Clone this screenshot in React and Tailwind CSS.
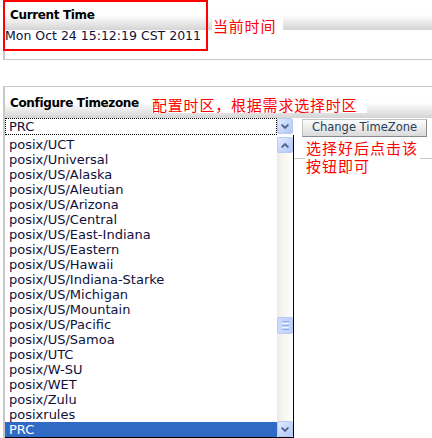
import React from "react";

const zones = [
  "posix/UCT",
  "posix/Universal",
  "posix/US/Alaska",
  "posix/US/Aleutian",
  "posix/US/Arizona",
  "posix/US/Central",
  "posix/US/East-Indiana",
  "posix/US/Eastern",
  "posix/US/Hawaii",
  "posix/US/Indiana-Starke",
  "posix/US/Michigan",
  "posix/US/Mountain",
  "posix/US/Pacific",
  "posix/US/Samoa",
  "posix/UTC",
  "posix/W-SU",
  "posix/WET",
  "posix/Zulu",
  "posixrules",
  "PRC",
];

function ArrowButton({ dir }) {
  return (
    <div className="w-[16px] h-[16px] shrink-0 rounded-[2px] border border-[#b7caf5] bg-[linear-gradient(135deg,#e3ebfd,#c3d4fa_60%,#b4c9f7)] flex items-center justify-center">
      <svg width="8" height="5" viewBox="0 0 8 5">
        <path
          d={dir === "up" ? "M0.6 4.4 L4 1.1 L7.4 4.4" : "M0.6 0.6 L4 3.9 L7.4 0.6"}
          stroke="#4d6185"
          strokeWidth="1.8"
          fill="none"
        />
      </svg>
    </div>
  );
}

function Thumb() {
  return (
    <div className="w-[16px] h-[17px] rounded-[2px] border border-[#b7caf5] bg-[linear-gradient(to_right,#cddbfc,#bfd1fa)] flex flex-col items-center justify-center gap-[1px]">
      <div className="w-[7px] h-[1px] bg-[#8eaaf0]" />
      <div className="w-[7px] h-[1px] bg-[#eef3fe]" />
      <div className="w-[7px] h-[1px] bg-[#8eaaf0]" />
      <div className="w-[7px] h-[1px] bg-[#eef3fe]" />
      <div className="w-[7px] h-[1px] bg-[#8eaaf0]" />
    </div>
  );
}

export default function App() {
  return (
    <div className="relative w-[432px] h-[438px] overflow-hidden bg-white text-[#10103a] font-['DejaVu_Sans',sans-serif]">
      {/* Current time panel */}
      <section className="ml-[3px] h-[60px] border-l-2 border-b border-[#c8c8c8]">
        <h2 className="h-[30px] flex items-center pl-[5px] text-[12px] font-bold tracking-[-0.35px] text-black bg-[linear-gradient(#fff_50%,#d4d4d4)]">
          Current Time
        </h2>
        <p className="-mt-[2px] text-[12.5px] leading-[15px]">Mon Oct 24 15:12:19 CST 2011</p>
      </section>

      {/* Timezone panel */}
      <section className="mt-[26px] ml-[3px] h-[352px] border-l-2 border-t border-[#c8c8c8]">
        <h2 className="h-[31px] flex items-center pl-[5px] text-[12px] font-bold tracking-[-0.35px] text-black bg-[linear-gradient(#fff_50%,#d4d4d4)]">
          Configure Timezone
        </h2>
        <div className="flex h-[41px] border-b border-[#c8c8c8]">
          <div className="relative w-[288px] h-[17px]">
            <div className="flex h-[17px]">
              <div className="flex-1 flex items-center pl-[3px] border border-dotted border-black text-[13px] leading-[15px]">
                PRC
              </div>
              <ArrowButton dir="down" />
            </div>
            {/* open option list */}
            <div className="absolute left-0 top-full z-10 w-[289px] h-[303px] pt-[2px] flex bg-white border-r border-b border-black">
              <ul className="flex-1 text-[13px] leading-[15px]">
                {zones.map((z) => (
                  <li
                    key={z}
                    className={
                      z === "PRC"
                        ? "h-[15px] pl-[4px] bg-[#316ac5] text-white"
                        : "h-[15px] pl-[4px]"
                    }
                  >
                    {z}
                  </li>
                ))}
              </ul>
              <div className="w-[16px] flex flex-col bg-[linear-gradient(to_right,#ecebe4,#f7f6f2_40%,#fdfdfb)]">
                <ArrowButton dir="up" />
                <div className="flex-1 pt-[164px]">
                  <Thumb />
                </div>
                <ArrowButton dir="down" />
              </div>
            </div>
          </div>
          <button className="ml-[9px] mt-[1px] w-[125px] h-[18px] flex items-center justify-center border border-[#c4c4c4] border-r-[#8a8a8a] border-b-[#8a8a8a] bg-[linear-gradient(#fdfdfd,#dadada)] text-[11.5px] text-[#24415f]">
            Change TimeZone
          </button>
        </div>
      </section>

      {/* Red notes */}
      <div className="absolute left-[3px] top-0 w-[205px] h-[51px] border-2 border-[#ff0000]" />
      <div className="absolute left-[212px] top-[17px] w-[71px] h-[17px] bg-white pl-[1px] text-[15px] leading-[17px] tracking-[0.8px] text-[#ff0000] font-['Noto_Sans_CJK_SC',sans-serif]">
        当前时间
      </div>
      <div className="absolute left-[152px] top-[96px] w-[215px] h-[17px] bg-white text-[15px] leading-[17px] tracking-[0.8px] text-[#ff0000] font-['Noto_Sans_CJK_SC',sans-serif]">
        配置时区，根据需求选择时区
      </div>
      <div className="absolute left-[305px] top-[139px] w-[115px] bg-white pl-[1px] text-[15px] leading-[18px] tracking-[1px] text-[#ff0000] font-['Noto_Sans_CJK_SC',sans-serif]">
        <p>选择好后点击该</p>
        <p>按钮即可</p>
      </div>
    </div>
  );
}
